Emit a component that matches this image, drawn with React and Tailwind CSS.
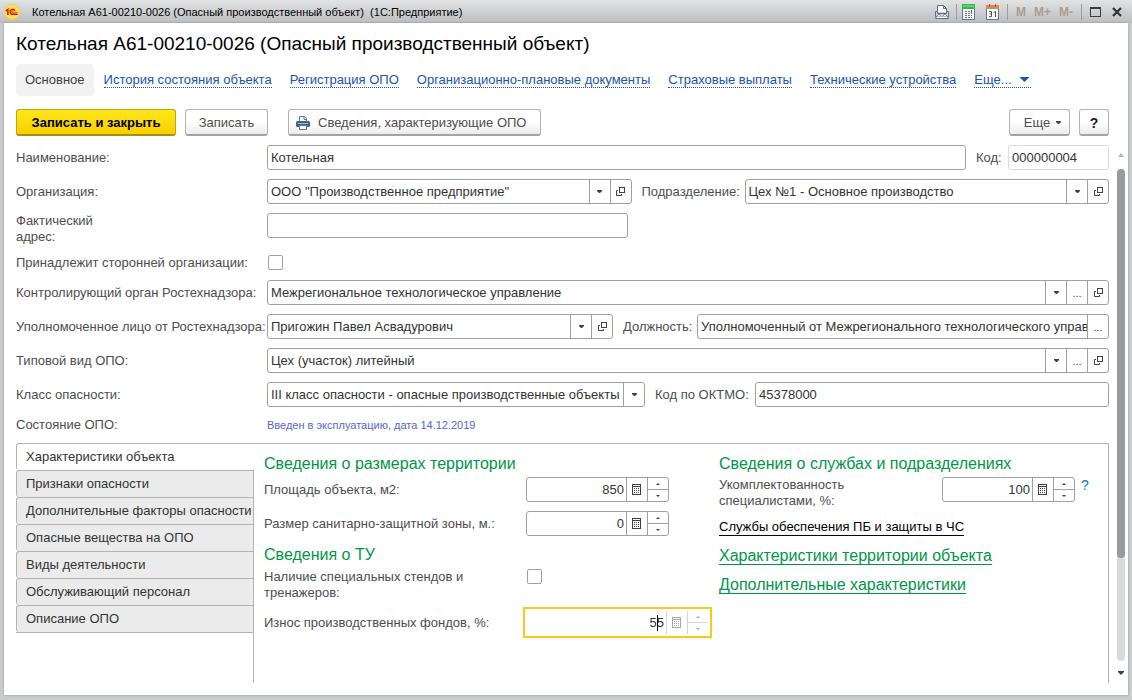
import React, { useState } from "react";

const NAV_LINKS = [
  "История состояния объекта",
  "Регистрация ОПО",
  "Организационно-плановые документы",
  "Страховые выплаты",
  "Технические устройства",
];

const TABS = [
  "Характеристики объекта",
  "Признаки опасности",
  "Дополнительные факторы опасности",
  "Опасные вещества на ОПО",
  "Виды деятельности",
  "Обслуживающий персонал",
  "Описание ОПО",
];

/* ---------- icons ---------- */

function LogoIcon() {
  return (
    <svg width="16" height="16" viewBox="0 0 16 16" aria-hidden="true">
      <circle cx="8" cy="8" r="7.5" fill="#fde34a" stroke="#f3c552" strokeWidth="0.6" />
      <path d="M1.8 6.8 L3.9 5.4 V11" fill="none" stroke="#d8141c" strokeWidth="1.6" />
      <path
        d="M11 6.8 A2.5 2.5 0 1 0 8.6 10.3 H13.6"
        fill="none"
        stroke="#d8141c"
        strokeWidth="1.4"
      />
      <path d="M9.7 7.4 A1 1 0 1 0 8.7 8.7 H13.6" fill="none" stroke="#d8141c" strokeWidth="0.8" />
    </svg>
  );
}

function TitlePrintIcon() {
  return (
    <svg width="16" height="16" viewBox="0 0 16 16" aria-hidden="true">
      <path d="M3.5 8 V1.5 H9.5 L12.5 4.5 V8" fill="#fff" stroke="#5b6f84" />
      <path d="M9.5 1.5 V4.5 H12.5" fill="none" stroke="#5b6f84" />
      <path
        d="M1.5 7.5 H3.5 V9.5 H12.5 V7.5 H14.5 V12.5 H1.5 Z"
        fill="#d5dde5"
        stroke="#5b6f84"
      />
      <rect x="3.5" y="10.5" width="3" height="2" rx="1" fill="#fff" stroke="#5b6f84" />
      <rect x="9.5" y="10.5" width="3" height="2" rx="1" fill="#fff" stroke="#5b6f84" />
      <path d="M2.5 12.5 L1.5 14.5 H14.5 L13.5 12.5" fill="#fff" stroke="#5b6f84" />
    </svg>
  );
}

function TitleCalcIcon() {
  return (
    <svg width="13" height="16" viewBox="0 0 13 16" shapeRendering="crispEdges" aria-hidden="true">
      <rect x="0.5" y="1.5" width="12" height="14" fill="#f4f6f8" stroke="#66788a" />
      <rect x="0" y="0" width="13" height="5" fill="#35b64c" />
      <rect x="1" y="1" width="11" height="2" fill="#5fd070" />
      <path
        d="M3 7h2v1H3z M6 7h2v1H6z M3 9h2v1H3z M6 9h2v1H6z M9 9h1v1H9z M3 11h2v1H3z M6 11h2v1H6z M9 11h1v1H9z M3 13h2v1H3z M6 13h2v1H6z M9 13h1v1H9z"
        fill="#66788a"
      />
      <rect x="9" y="6" width="1" height="3" fill="#e03a34" />
    </svg>
  );
}

function TitleCalendarIcon() {
  return (
    <svg width="13" height="16" viewBox="0 0 13 16" aria-hidden="true">
      <rect x="0.5" y="2.5" width="12" height="13" fill="#fff" stroke="#66788a" />
      <rect x="0" y="1" width="13" height="4" fill="#cf8a5a" />
      <path d="M3.5 0 V3 M9.5 0 V3" stroke="#a65f35" />
      <path d="M3 7.5 H5.5 V12.5 H3 M3.5 10 H5.5 M7.5 8.5 L9.5 7.5 V13" fill="none" stroke="#50545a" />
    </svg>
  );
}

function PrinterIcon() {
  return (
    <svg width="14" height="14" viewBox="0 0 14 14" aria-hidden="true">
      <path d="M3.5 6 V0.5 H8.5 L10.5 2.5 V6" fill="#fff" stroke="#5f7a94" />
      <path d="M8 1 V3.5 H10.5" fill="none" stroke="#5f7a94" />
      <rect x="0" y="5" width="14" height="6" rx="1.5" fill="#3f6689" />
      <rect x="2" y="7" width="10" height="1" fill="#a9bccd" />
      <rect x="3.5" y="9.5" width="7" height="4" fill="#fff" stroke="#5f7a94" />
    </svg>
  );
}

function ArrowDown() {
  return (
    <svg width="5" height="3" viewBox="0 0 5 3" aria-hidden="true">
      <path d="M0 0 H5 V1 L3 3 H2 L0 1 Z" fill="#404040" />
    </svg>
  );
}

function OpenIcon() {
  return (
    <svg width="9" height="9" viewBox="0 0 9 9" fill="none" stroke="#404040" aria-hidden="true">
      <rect x="3.5" y="0.5" width="5" height="5" />
      <path d="M2 3.5 H0.5 V8.5 H5.5 V7" />
    </svg>
  );
}

function CalcIcon({ color }) {
  return (
    <svg width="10" height="11" viewBox="0 0 10 11" fill={color} shapeRendering="crispEdges" aria-hidden="true">
      <path fillRule="evenodd" d="M0 0 H9 V11 H0 Z M1 3 V10 H8 V3 Z M1 1 V2 H8 V1 Z" />
      <path d="M2 4h1v1H2z M4 4h1v1H4z M6 4h1v1H6z M2 6h1v1H2z M4 6h1v1H4z M6 6h1v1H6z M2 8h1v1H2z M4 8h1v1H4z M6 8h1v1H6z" />
    </svg>
  );
}

function SpinArrow({ up, color }) {
  return (
    <svg width="4" height="2" viewBox="0 0 4 2" aria-hidden="true">
      <path d={up ? "M0 2 L2 0 L4 2 Z" : "M0 0 L2 2 L4 0 Z"} fill={color} />
    </svg>
  );
}

/* ---------- fields ---------- */

const BOX = "flex h-[25px] min-w-0 items-stretch overflow-hidden rounded-[3px] border bg-white";

function Label({ htmlFor, children }) {
  return (
    <label htmlFor={htmlFor} className="w-[251px] shrink-0 whitespace-nowrap text-[#4d4d4d]">
      {children}
    </label>
  );
}

function FieldButton({ title, children }) {
  return (
    <button
      type="button"
      title={title}
      className="flex w-[21px] shrink-0 items-center justify-center border-l border-[#a0a0a0] text-[#404040] hover:bg-[#f2f2f2]"
    >
      {children}
    </button>
  );
}

function TextField({ id, value, className = "flex-1", border = "border-[#a0a0a0]", buttons = [] }) {
  const [text, setText] = useState(value);
  return (
    <div className={`${BOX} ${border} ${className}`}>
      <input
        id={id}
        type="text"
        value={text}
        onChange={(e) => setText(e.target.value)}
        className="w-0 min-w-0 flex-1 pl-[3px] text-[#333] outline-none"
      />
      {buttons.includes("list") && (
        <FieldButton title="Выбрать из списка">
          <ArrowDown />
        </FieldButton>
      )}
      {buttons.includes("dots") && (
        <FieldButton title="Выбрать">
          <span className="text-[11px]">...</span>
        </FieldButton>
      )}
      {buttons.includes("open") && (
        <FieldButton title="Открыть">
          <OpenIcon />
        </FieldButton>
      )}
    </div>
  );
}

function NumberField({ id, value, className, active }) {
  const [text, setText] = useState(value);
  const color = active ? "#a6a6a6" : "#404040";
  const line = active ? "border-[#d4d4d4]" : "border-[#a0a0a0]";
  return (
    <div
      className={
        active
          ? `relative flex h-[25px] items-stretch border border-white bg-white outline-2 outline-offset-1 outline-[#fbc91d] ${className}`
          : `${BOX} border-[#a0a0a0] ${className}`
      }
    >
      <input
        id={id}
        type="text"
        inputMode="numeric"
        value={text}
        onChange={(e) => setText(e.target.value)}
        className="w-0 min-w-0 flex-1 pr-[2px] text-right text-[#333] outline-none"
      />
      {active && <span className="absolute top-1 right-[50px] h-4 w-px bg-black" />}
      <button
        type="button"
        title="Калькулятор"
        className={`flex w-[21px] shrink-0 items-center justify-center border-l ${line}`}
      >
        <CalcIcon color={color} />
      </button>
      <div className={`flex w-[21px] shrink-0 flex-col border-l ${line}`}>
        <button
          type="button"
          title="Увеличить"
          className={`flex flex-1 items-center justify-center border-b ${line}`}
        >
          <SpinArrow up color={color} />
        </button>
        <button type="button" title="Уменьшить" className="flex flex-1 items-center justify-center">
          <SpinArrow color={color} />
        </button>
      </div>
    </div>
  );
}

function CheckBox({ id }) {
  return (
    <input
      id={id}
      type="checkbox"
      className="ml-px size-[15px] shrink-0 appearance-none rounded-[2px] border border-[#a0a0a0] bg-white checked:bg-[#666]"
    />
  );
}

function Button({ className = "", children, ...rest }) {
  return (
    <button
      type="button"
      className={`flex h-[27px] items-center justify-center rounded-[3px] border border-b-2 border-[#b3b3b3] border-b-[#a3a3a3] bg-linear-to-b from-white from-50% to-[#ececec] pt-px text-[#4d4d4d] ${className}`}
      {...rest}
    >
      {children}
    </button>
  );
}

/* ---------- window parts ---------- */

function TitleBar() {
  return (
    <header className="flex h-[23px] items-center bg-linear-to-b from-[#e2e3e4] to-[#bcbdbf] pr-2.5 pl-1 text-[12px] text-black">
      <LogoIcon />
      <span className="ml-3 flex-1 truncate whitespace-pre text-[11px]">
        {"Котельная А61-00210-0026 (Опасный производственный объект)  (1С:Предприятие)"}
      </span>
      <button type="button" title="Печать" className="mr-1.5">
        <TitlePrintIcon />
      </button>
      <span className="h-4 w-px bg-[#9b9c9e]" />
      <button type="button" title="Калькулятор" className="mr-[11px] ml-[5px]">
        <TitleCalcIcon />
      </button>
      <button type="button" title="Календарь" className="mr-2">
        <TitleCalendarIcon />
      </button>
      <span className="h-4 w-px bg-[#9b9c9e]" />
      <div className="flex items-center gap-2 px-2 font-bold text-[#aa9c93]">
        <button type="button">M</button>
        <button type="button">M+</button>
        <button type="button">M-</button>
      </div>
      <span className="h-4 w-px bg-[#9b9c9e]" />
      <button type="button" title="Развернуть" className="ml-2">
        <svg width="12" height="10" viewBox="0 0 12 10" shapeRendering="crispEdges" aria-hidden="true">
          <path fillRule="evenodd" d="M0 0 H11 V10 H0 Z M1 2 V9 H10 V2 Z" fill="#3c3c3c" />
        </svg>
      </button>
      <button type="button" title="Закрыть" className="ml-2.5">
        <svg width="10" height="10" viewBox="0 0 10 10" aria-hidden="true">
          <path d="M1 1 L9 9 M9 1 L1 9" stroke="#333" strokeWidth="2.2" />
        </svg>
      </button>
    </header>
  );
}

function NavBar() {
  return (
    <nav className="mt-2 flex h-8 items-center gap-[18px] whitespace-nowrap text-[#1a53b0]">
      <a
        href="#main"
        className="-mr-2 flex h-8 items-center rounded-[4px] bg-[#f2f2f2] px-[9px] text-[#404040]"
      >
        Основное
      </a>
      {NAV_LINKS.map((text) => (
        <a key={text} href="#nav" className="border-b border-dotted border-[#1a53b0] leading-[15px]">
          {text}
        </a>
      ))}
      <a
        href="#more"
        className="flex items-center gap-2 border-b border-dotted border-[#1a53b0] leading-[15px]"
      >
        Еще...
        <svg width="9" height="5" viewBox="0 0 9 5" className="mr-0.5" aria-hidden="true">
          <path d="M0 0 H9 V0.5 L4.5 5 L0 0.5 Z" fill="#1a53b0" />
        </svg>
      </a>
    </nav>
  );
}

function CommandBar() {
  return (
    <div className="mt-[13px] flex items-center whitespace-nowrap">
      <button
        type="button"
        className="flex h-[27px] w-40 items-center justify-center rounded-[3px] border border-b-2 border-[#c2a20d] border-b-[#a88f12] bg-linear-to-b from-[#ffe71a] to-[#f7cf00] pt-px font-bold text-black"
      >
        Записать и закрыть
      </button>
      <Button className="ml-[9px] w-[83px]">Записать</Button>
      <Button className="ml-5 gap-2 pr-[14px] pl-[7px]">
        <PrinterIcon />
        Сведения, характеризующие ОПО
      </Button>
      <Button className="ml-auto w-[61px] gap-1.5 pl-1.5">
        Еще
        <ArrowDown />
      </Button>
      <Button className="ml-[9px] w-[30px]" title="Справка">
        <span className="text-[14px] font-bold text-[#1a1a1a]">?</span>
      </Button>
    </div>
  );
}

function MainFields() {
  return (
    <div className="flex flex-col gap-[9px]">
      <div className="flex items-center">
        <Label htmlFor="name">Наименование:</Label>
        <TextField id="name" value="Котельная" />
        <label htmlFor="code" className="mx-2.5 w-[22px] whitespace-nowrap text-[#4d4d4d]">
          Код:
        </label>
        <TextField id="code" value="000000004" className="w-[101px]" border="border-[#dcdcdc]" />
      </div>

      <div className="flex items-center">
        <Label htmlFor="org">Организация:</Label>
        <TextField id="org" value={'ООО "Производственное предприятие"'} buttons={["list", "open"]} />
        <label htmlFor="dept" className="ml-2.5 w-[103px] whitespace-nowrap text-[#4d4d4d]">
          Подразделение:
        </label>
        <TextField id="dept" value="Цех №1 - Основное производство" buttons={["list", "open"]} />
      </div>

      <div className="flex h-[33px] items-start">
        <Label htmlFor="address">
          Фактический
          <br />
          адрес:
        </Label>
        <TextField id="address" value="" className="w-[361px]" />
      </div>

      <div className="flex h-4 items-start">
        <Label htmlFor="foreign">Принадлежит сторонней организации:</Label>
        <CheckBox id="foreign" />
      </div>

      <div className="flex items-center">
        <Label htmlFor="authority">Контролирующий орган Ростехнадзора:</Label>
        <TextField
          id="authority"
          value="Межрегиональное технологическое управление"
          buttons={["list", "dots", "open"]}
        />
      </div>

      <div className="flex items-center">
        <Label htmlFor="person">Уполномоченное лицо от Ростехнадзора:</Label>
        <TextField
          id="person"
          value="Пригожин Павел Асвадурович"
          className="w-[346px]"
          buttons={["list", "open"]}
        />
        <label htmlFor="position" className="ml-2.5 w-[74px] whitespace-nowrap text-[#4d4d4d]">
          Должность:
        </label>
        <TextField
          id="position"
          value="Уполномоченный от Межрегионального технологического управления"
          buttons={["dots"]}
        />
      </div>

      <div className="flex items-center">
        <Label htmlFor="kind">Типовой вид ОПО:</Label>
        <TextField id="kind" value="Цех (участок) литейный" buttons={["list", "dots", "open"]} />
      </div>

      <div className="flex items-center">
        <Label htmlFor="hazard">Класс опасности:</Label>
        <div className={`${BOX} relative w-[378px] border-[#a0a0a0]`}>
          <select
            id="hazard"
            className="mr-[21px] w-0 min-w-0 flex-1 appearance-none overflow-hidden pl-[3px] whitespace-nowrap text-[#333] outline-none"
          >
            <option>III класс опасности - опасные производственные объекты средней опасности</option>
          </select>
          <span className="pointer-events-none absolute inset-y-0 right-0 flex w-[21px] items-center justify-center border-l border-[#a0a0a0]">
            <ArrowDown />
          </span>
        </div>
        <label htmlFor="oktmo" className="ml-2.5 w-[100px] whitespace-nowrap text-[#4d4d4d]">
          Код по ОКТМО:
        </label>
        <TextField id="oktmo" value="45378000" />
      </div>

      <div className="flex h-[18px] items-center">
        <span className="w-[251px] shrink-0 text-[#4d4d4d]">Состояние ОПО:</span>
        <span className="text-[11px] text-[#5468c8]">Введен в эксплуатацию, дата 14.12.2019</span>
      </div>
    </div>
  );
}

function TabList({ current, onSelect }) {
  return (
    <div role="tablist" className="flex w-[238px] shrink-0 flex-col">
      {TABS.map((text, i) => (
        <button
          key={text}
          type="button"
          role="tab"
          aria-selected={i === current}
          onClick={() => onSelect(i)}
          className={
            i === current
              ? "h-[27px] rounded-l-[3px] border-t border-l border-[#b3b3b3] bg-white pl-[9px] text-left text-[#333]"
              : "h-[27px] rounded-l-[3px] border-t border-r border-l border-[#b3b3b3] bg-[#ebebeb] pl-[9px] text-left whitespace-nowrap text-[#333]"
          }
        >
          {text}
        </button>
      ))}
      <div className="flex-1 border-t border-r border-[#b3b3b3]" />
    </div>
  );
}

function Heading({ children }) {
  return <h2 className="text-[16px] leading-5 text-[#009646]">{children}</h2>;
}

function ObjectPanel() {
  return (
    <div
      role="tabpanel"
      className="grid min-w-0 flex-1 grid-cols-[455px_1fr] border-t border-r border-[#b3b3b3] pt-2.5 pl-2.5"
    >
      <div className="text-[#4d4d4d]">
        <Heading>Сведения о размерах территории</Heading>
        <div className="mt-[3px] flex items-center">
          <label htmlFor="area" className="w-[262px]">
            Площадь объекта, м2:
          </label>
          <NumberField id="area" value="850" className="w-[143px]" />
        </div>
        <div className="mt-[9px] flex items-center">
          <label htmlFor="zone" className="w-[262px]">
            Размер санитарно-защитной зоны, м.:
          </label>
          <NumberField id="zone" value="0" className="w-[143px]" />
        </div>
        <div className="mt-[9px]">
          <Heading>Сведения о ТУ</Heading>
        </div>
        <div className="mt-1 flex items-start">
          <label htmlFor="stands" className="w-[262px]">
            Наличие специальных стендов и
            <br />
            тренажеров:
          </label>
          <CheckBox id="stands" />
        </div>
        <div className="mt-[9px] flex items-center">
          <label htmlFor="wear" className="w-[262px]">
            Износ производственных фондов, %:
          </label>
          <NumberField id="wear" value="55" className="w-[183px]" active />
        </div>
      </div>

      <div className="flex flex-col items-start text-[#4d4d4d]">
        <Heading>Сведения о службах и подразделениях</Heading>
        <div className="mt-[3px] flex items-start">
          <label htmlFor="staff" className="w-[223px]">
            Укомплектованность
            <br />
            специалистами, %:
          </label>
          <NumberField id="staff" value="100" className="w-[133px]" />
          <button type="button" title="Подсказка" className="ml-1.5 text-[14px] text-[#0a7ac2]">
            ?
          </button>
        </div>
        <a href="#services" className="mt-2.5 border-b border-black leading-4 text-black">
          Службы обеспечения ПБ и защиты в ЧС
        </a>
        <a
          href="#territory"
          className="mt-3 border-b border-[#009646] text-[16px] leading-4 text-[#009646]"
        >
          Характеристики территории объекта
        </a>
        <a
          href="#extra"
          className="mt-3 border-b border-[#009646] text-[16px] leading-4 text-[#009646]"
        >
          Дополнительные характеристики
        </a>
      </div>
    </div>
  );
}

function ScrollBar() {
  return (
    <div className="ml-2 flex w-2 shrink-0 flex-col items-center pt-2" aria-hidden="true">
      <svg width="6" height="4" viewBox="0 0 6 4" className="shrink-0">
        <path d="M3 0 L6 4 H0 Z" fill="#b5b5b5" />
      </svg>
      <div className="mt-3 w-2 flex-1 rounded-full bg-[#dadada]">
        <div className="h-[79%] rounded-full bg-[#9a9a9a]" />
      </div>
      <svg width="6" height="4" viewBox="0 0 6 4" className="mt-2.5 mb-2 shrink-0">
        <path d="M0 0 H6 V1 L3 4 L0 1 Z" fill="#404040" />
      </svg>
    </div>
  );
}

export default function App() {
  const [tab, setTab] = useState(0);

  return (
    <div className="flex min-h-screen flex-col bg-[#cbccce] font-['Liberation_Sans',Arial,sans-serif] text-[13px] leading-4">
      <TitleBar />
      <main className="mx-1 mb-[5px] flex flex-1 flex-col bg-white pr-[3px] pb-3 pl-3 shadow-[0_0_2px_#8c8c8c]">
        <div className="pr-4">
          <h1 className="pt-[9px] text-[19px] leading-6 text-black">
            Котельная А61-00210-0026 (Опасный производственный объект)
          </h1>
          <NavBar />
          <CommandBar />
        </div>

        <div className="mt-[9px] flex flex-1">
          <div className="flex min-w-0 flex-1 flex-col">
            <MainFields />
            <div className="mt-[9px] flex flex-1">
              <TabList current={tab} onSelect={setTab} />
              <ObjectPanel />
            </div>
          </div>
          <ScrollBar />
        </div>
      </main>
    </div>
  );
}
